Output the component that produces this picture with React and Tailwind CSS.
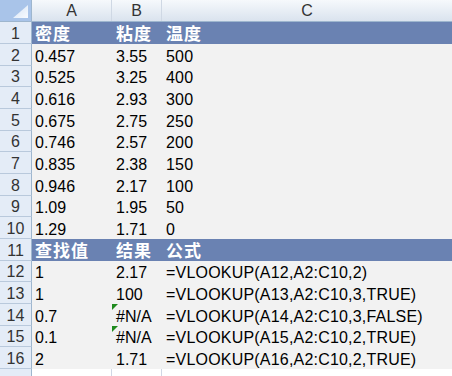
import React from "react";

const font = { fontFamily: '"Liberation Sans", Arial, "Noto Sans CJK SC", sans-serif' };

// Sheet rows: kind "band" = blue heading row, others = grey-filled data rows
const rows = [
  { n: 1, h: "h-[22px]", kind: "band", a: "密度", b: "粘度", c: "温度" },
  { n: 2, h: "h-[22px]", a: "0.457", b: "3.55", c: "500" },
  { n: 3, h: "h-[21px]", a: "0.525", b: "3.25", c: "400" },
  { n: 4, h: "h-[22px]", a: "0.616", b: "2.93", c: "300" },
  { n: 5, h: "h-[22px]", a: "0.675", b: "2.75", c: "250" },
  { n: 6, h: "h-[21px]", a: "0.746", b: "2.57", c: "200" },
  { n: 7, h: "h-[22px]", a: "0.835", b: "2.38", c: "150" },
  { n: 8, h: "h-[22px]", a: "0.946", b: "2.17", c: "100" },
  { n: 9, h: "h-[21px]", a: "1.09", b: "1.95", c: "50" },
  { n: 10, h: "h-[22px]", a: "1.29", b: "1.71", c: "0" },
  { n: 11, h: "h-[22px]", kind: "band", a: "查找值", b: "结果", c: "公式" },
  { n: 12, h: "h-[21px]", a: "1", b: "2.17", c: "=VLOOKUP(A12,A2:C10,2)" },
  { n: 13, h: "h-[22px]", a: "1", b: "100", c: "=VLOOKUP(A13,A2:C10,3,TRUE)" },
  { n: 14, h: "h-[22px]", a: "0.7", b: "#N/A", err: true, c: "=VLOOKUP(A14,A2:C10,3,FALSE)" },
  { n: 15, h: "h-[21px]", a: "0.1", b: "#N/A", err: true, c: "=VLOOKUP(A15,A2:C10,2,TRUE)" },
  { n: 16, h: "h-[22px]", a: "2", b: "1.71", c: "=VLOOKUP(A16,A2:C10,2,TRUE)" },
];

function ErrorMark() {
  return (
    <svg className="absolute left-0 top-0" width="6" height="6" viewBox="0 0 6 6">
      <polygon points="0,0 6,0 0,6" fill="#1e8a1e" />
    </svg>
  );
}

function RowHead({ n, h }) {
  return (
    <div
      className={`${h} w-[32px] shrink-0 flex items-end justify-center border-r border-b border-r-[#9eb6ce] border-b-[#b9c9dc] bg-[#e4ecf7] text-[16px] leading-[18px] text-[#333]`}
    >
      {n}
    </div>
  );
}

export default function App() {
  return (
    <div className="w-[452px] h-[376px] overflow-hidden bg-white text-black" style={font}>
      {/* column headers */}
      <div className="flex h-[22px] border-b border-[#9eb6ce] bg-gradient-to-b from-[#f6f9fc] to-[#dae3ee] text-[16px] leading-[18px] text-[#333]">
        <div className="w-[32px] shrink-0 border-r border-[#9eb6ce] bg-[#a9c4e9] flex items-end justify-end pr-[3px] pb-[3px]">
          <svg width="15" height="13" viewBox="0 0 15 13">
            <defs>
              <linearGradient id="corner" x1="0" y1="0" x2="1" y2="1">
                <stop offset="0" stopColor="#d4e2f4" />
                <stop offset="1" stopColor="#f8fbff" />
              </linearGradient>
            </defs>
            <polygon points="15,0 15,13 0,13" fill="url(#corner)" />
          </svg>
        </div>
        <div className="w-[80px] shrink-0 border-r border-[#cfd8e4] flex items-center justify-center">A</div>
        <div className="w-[50px] shrink-0 border-r border-[#cfd8e4] flex items-center justify-center">B</div>
        <div className="w-[290px] shrink-0 flex items-center justify-center">C</div>
      </div>

      {rows.map((r) => {
        const band = r.kind === "band";
        const cell = band
          ? "bg-[#6a82b2] text-white font-bold text-[17px] tracking-[1px]"
          : "bg-[#f2f2f2] text-black text-[16px]";
        return (
          <div key={r.n} className={`flex ${r.h}`}>
            <RowHead n={r.n} h={r.h} />
            <div className={`w-[80px] shrink-0 flex items-end pl-[3px] leading-[18px] whitespace-nowrap ${cell}`}>
              {r.a}
            </div>
            <div className={`relative w-[50px] shrink-0 flex items-end pl-[4px] leading-[18px] whitespace-nowrap ${cell}`}>
              {r.err && <ErrorMark />}
              {r.b}
            </div>
            <div className={`w-[290px] shrink-0 flex items-end pl-[4px] leading-[18px] whitespace-nowrap ${band ? "" : "tracking-[0.2px]"} ${cell}`}>
              {r.c}
            </div>
          </div>
        );
      })}

      {/* empty row below the table */}
      <div className="flex h-[22px]">
        <div className="h-[22px] w-[32px] shrink-0 border-r border-b border-r-[#9eb6ce] border-b-[#b9c9dc] bg-[#e4ecf7]" />
        <div className="w-[80px] shrink-0 border-r border-b border-[#d0d7e5]" />
        <div className="w-[50px] shrink-0 border-r border-b border-[#d0d7e5]" />
        <div className="w-[290px] shrink-0 border-b border-[#d0d7e5]" />
      </div>
    </div>
  );
}
